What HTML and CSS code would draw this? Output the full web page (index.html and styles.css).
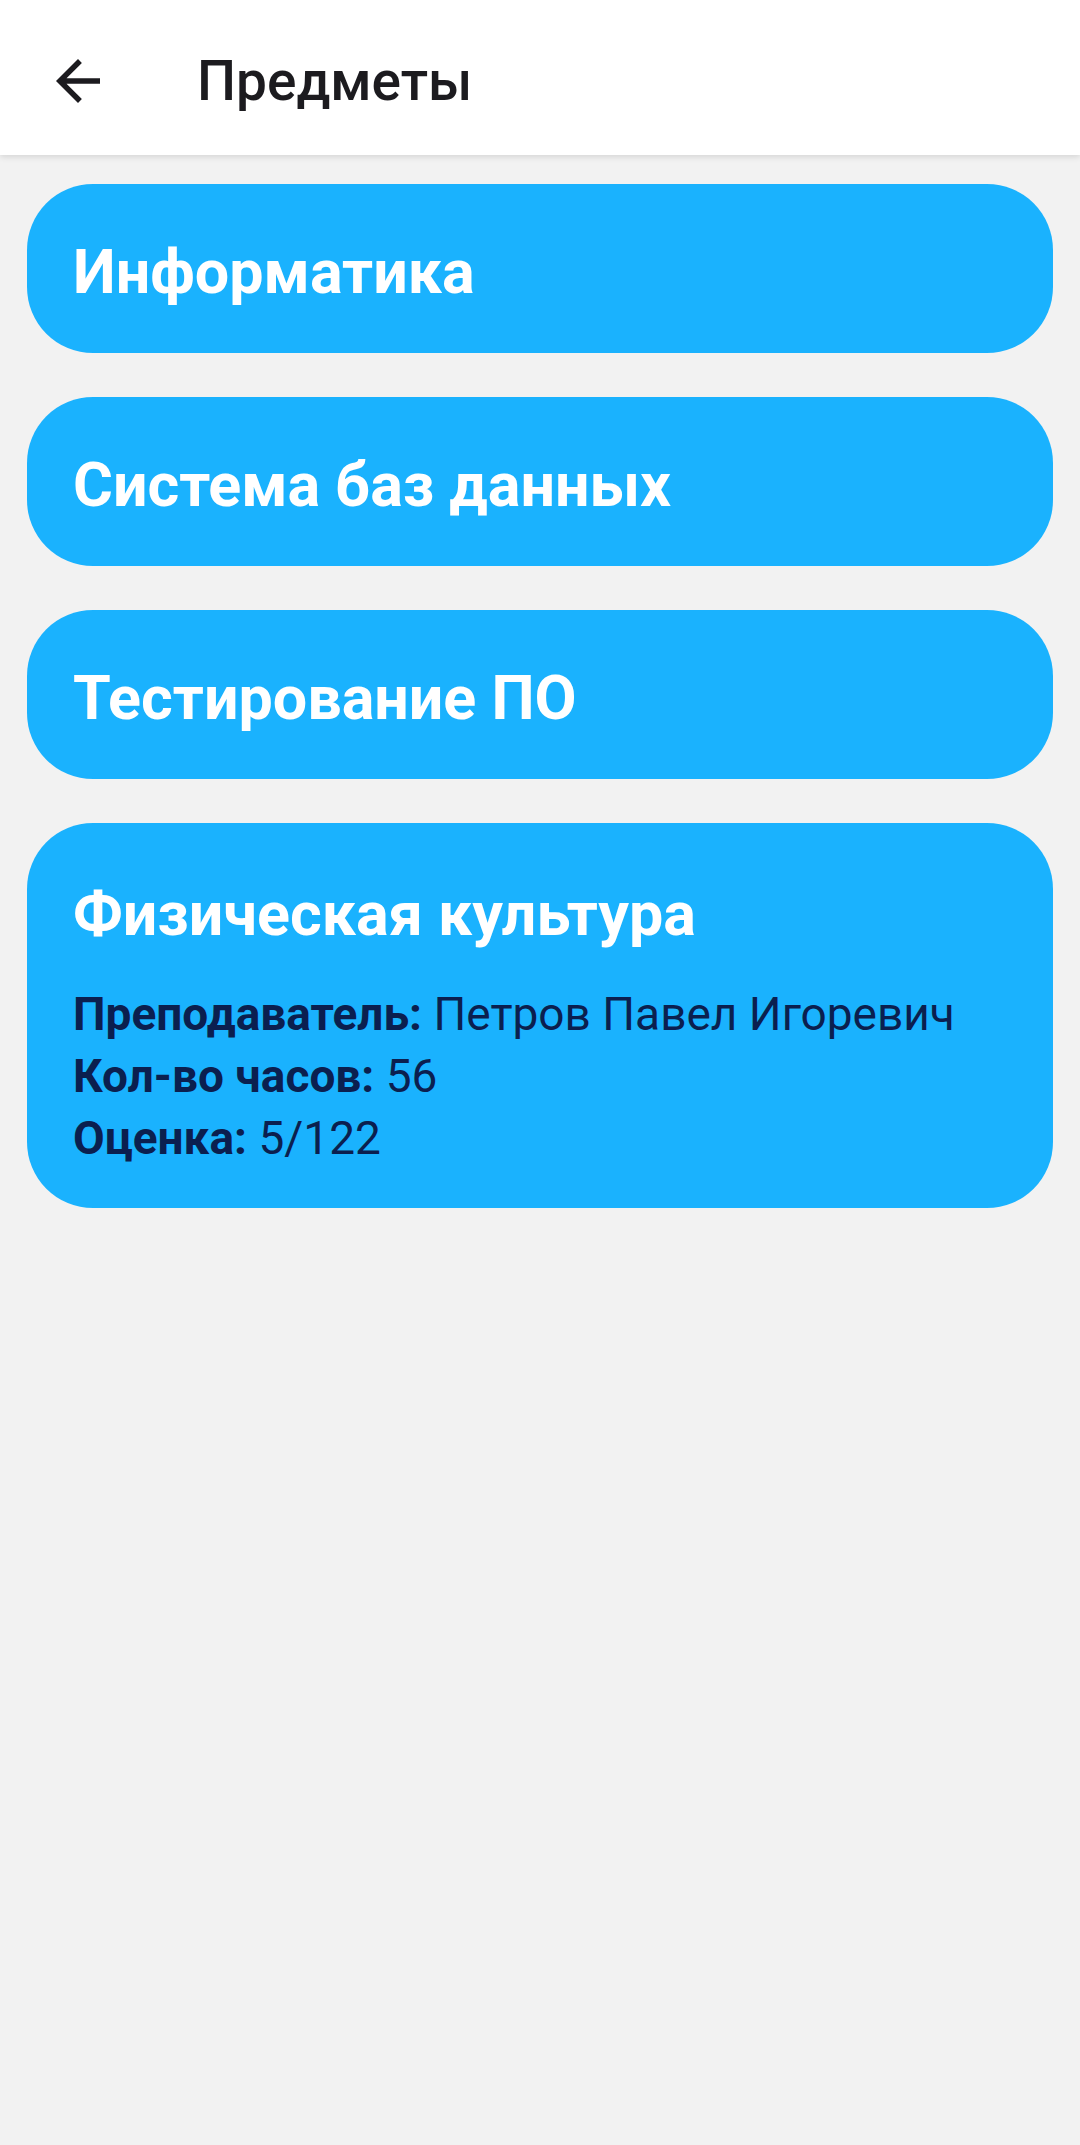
FILE: index.html
```html
<!DOCTYPE html>
<html lang="ru">
<head>
<meta charset="utf-8">
<link rel="stylesheet" href="styles.css">
</head>
<body>
<header class="appbar">
  <span class="back">
    <svg viewBox="0 0 24 24" width="66" height="66"><path d="M20 11H7.83l5.59-5.59L12 4l-8 8 8 8 1.41-1.41L7.83 13H20v-2z" fill="#1c1b1f"/></svg>
  </span>
  <h1 class="title">Предметы</h1>
</header>
<main class="list">
  <div class="card"><div class="card-title">Информатика</div></div>
  <div class="card"><div class="card-title">Система баз данных</div></div>
  <div class="card"><div class="card-title">Тестирование ПО</div></div>
  <div class="card open">
    <div class="card-title">Физическая культура</div>
    <div class="details">
      <div class="row"><b>Преподаватель:</b> Петров Павел Игоревич</div>
      <div class="row"><b>Кол-во часов:</b> 56</div>
      <div class="row"><b>Оценка:</b> 5/122</div>
    </div>
  </div>
</main>
</body>
</html>
```
FILE: styles.css
```css
html, body {
  margin: 0;
  padding: 0;
}
body {
  width: 1080px;
  height: 2145px;
  background: #f2f2f2;
  font-family: Roboto, "Noto Sans", sans-serif;
  overflow: hidden;
}
.appbar {
  height: 155px;
  background: #ffffff;
  display: flex;
  align-items: center;
  box-shadow: 0 2px 6px rgba(0,0,0,0.12);
  position: relative;
}
.back {
  width: 66px;
  height: 66px;
  margin-left: 45px;
  margin-top: 6px;
  display: flex;
}
.title {
  margin: 8px 0 0 86px;
  font-size: 55px;
  font-weight: 500;
  color: #1c1b1f;
  line-height: 1;
}
.list {
  padding: 29px 27px 0 27px;
  display: flex;
  flex-direction: column;
  gap: 44px;
}
.card {
  background: #1ab2fe;
  border-radius: 66px;
  height: 169px;
  box-sizing: border-box;
  padding: 6px 44px 0 46px;
  display: flex;
  align-items: center;
}
.card-title {
  color: #ffffff;
  font-size: 61px;
  font-weight: 700;
  line-height: 72px;
}
.card.open {
  height: auto;
  display: block;
  padding: 55px 44px 39px 46px;
}
.details {
  margin-top: 33px;
  color: #0b1f4f;
  font-size: 46px;
  line-height: 62px;
}
.details b {
  font-weight: 700;
}
```
